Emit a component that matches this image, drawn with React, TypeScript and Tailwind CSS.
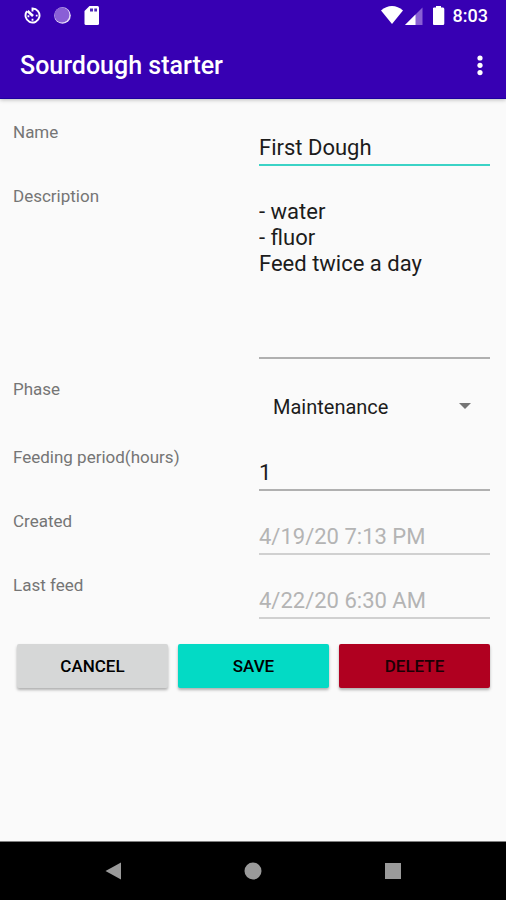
import { useState } from "react";
import type { ReactNode } from "react";

const underline =
  "ml-1.5 mr-[3px] block min-w-0 rounded-none border-b-2 bg-transparent pt-[14px] text-[22px] leading-[26px] outline-none";

function Row({ id, label, className, children }: { id: string; label: string; className: string; children: ReactNode }) {
  return (
    <div className={`grid grid-cols-2 items-start ${className}`}>
      <label htmlFor={id} className="text-[17px] leading-[22px] text-[#757575]">
        {label}
      </label>
      <div className="grid">{children}</div>
    </div>
  );
}

function StatusBar() {
  return (
    <div className="flex h-8 items-center justify-between pr-[18px] pl-6 text-white">
      <div className="flex items-center gap-3">
        <svg width="18" height="18" viewBox="0 0 18 18" fill="none" stroke="currentColor" strokeWidth="1.900" aria-hidden>
          <path d="M8.500 4.500V1.500a7 7 0 1 1-5.500 2.700" />
          <path d="M3.600 4 9 9" strokeWidth="2.600" />
          <path d="M3.500 9.300h1.800M7.600 12.800h1.800M11.800 8.600h1.800" strokeWidth="1.900" />
        </svg>
        <svg width="18" height="18" viewBox="0 0 18 18" aria-hidden>
          <circle cx="8.500" cy="8.500" r="8.300" fill="#e6dcf8" />
          <circle cx="7.900" cy="7.900" r="7.500" fill="#8a5fd6" />
        </svg>
        <svg width="16" height="20" viewBox="0 0 16 20" aria-hidden>
          <path
            fill="currentColor"
            d="M5.500 0h8a1.500 1.500 0 0 1 1.500 1.500v16a1.500 1.500 0 0 1-1.500 1.500h-11.500a1.500 1.500 0 0 1-1.500-1.500V5z"
          />
          <path fill="#4d25b8" d="M6 2.500h3v3H6zM10.300 2.500h2.700v3h-2.700z" />
        </svg>
      </div>
      <div className="flex items-center">
        <svg width="22" height="20" viewBox="0 0 22 20" aria-hidden>
          <path fill="currentColor" d="M0 4.500Q5 0 11 0t11 4.500L11 18z" />
        </svg>
        <svg className="ml-0.5" width="18" height="20" viewBox="0 0 18 20" aria-hidden>
          <path fill="#8a60d4" d="M17.500 1.500v17.500H0z" />
          <path fill="currentColor" d="M10.500 8.500V19H0z" />
        </svg>
        <svg className="ml-2.5" width="12" height="20" viewBox="0 0 12 20" aria-hidden>
          <path fill="currentColor" d="M3 0h5v1.500h2q1.300 0 1.300 1.500v14.500q0 1.500-1.300 1.500h-9q-1.300 0-1.300-1.500V3q0-1.500 1.300-1.500H3z" />
        </svg>
        <span className="ml-2 text-lg leading-5 font-medium">8:03</span>
      </div>
    </div>
  );
}

export default function App() {
  const [name, setName] = useState("First Dough");
  const [description, setDescription] = useState("- water\n- fluor\nFeed twice a day");
  const [phase, setPhase] = useState("Maintenance");
  const [period, setPeriod] = useState("1");

  return (
    <div className="flex min-h-screen flex-col bg-[#fafafa] font-[Roboto,sans-serif] text-[#1c1c1c]">
      <header className="border-b border-[#1d00a0] bg-[#3700b3] shadow-[0_1px_4px_rgba(0,0,0,0.25)]">
        <StatusBar />
        <div className="flex h-[66px] items-center justify-between pt-0.5 pr-3.5 pl-5">
          <h1 className="text-[25px] leading-8 font-medium text-white">Sourdough starter</h1>
          <button type="button" aria-label="More options" className="flex h-8 w-6 items-center justify-center text-white">
            <svg width="6" height="22" viewBox="0 0 6 22" fill="currentColor" aria-hidden>
              <circle cx="3" cy="3" r="2.600" />
              <circle cx="3" cy="10.300" r="2.600" />
              <circle cx="3" cy="17.600" r="2.600" />
            </svg>
          </button>
        </div>
      </header>

      <main className="flex-1 pt-[22px]">
        <form onSubmit={(e) => e.preventDefault()}>
          <div className="px-[13px]">
            <Row id="name" label="Name" className="h-16">
              <input
                id="name"
                className={`${underline} border-[#3bd3c6] pb-[3px]`}
                value={name}
                onChange={(e) => setName(e.target.value)}
              />
            </Row>
            <Row id="description" label="Description" className="h-[193px]">
              <textarea
                id="description"
                className={`${underline} h-[174px] resize-none border-[#b0b0b0]`}
                value={description}
                onChange={(e) => setDescription(e.target.value)}
              />
            </Row>
            <Row id="phase" label="Phase" className="h-[68px]">
              <div className="relative grid pt-[13px]">
                <select
                  id="phase"
                  className="h-8 appearance-none bg-transparent pl-5 text-xl leading-8 outline-none"
                  value={phase}
                  onChange={(e) => setPhase(e.target.value)}
                >
                  <option>Maintenance</option>
                  <option>Growth</option>
                </select>
                <svg
                  className="pointer-events-none absolute top-[25px] right-[22px]"
                  width="12"
                  height="6"
                  viewBox="0 0 12 6"
                  aria-hidden
                >
                  <path fill="#757575" d="M0 0h12L6 6z" />
                </svg>
              </div>
            </Row>
            <Row id="period" label="Feeding period(hours)" className="h-16">
              <input
                id="period"
                inputMode="numeric"
                className={`${underline} border-[#b0b0b0] pb-[3px]`}
                value={period}
                onChange={(e) => setPeriod(e.target.value)}
              />
            </Row>
            <Row id="created" label="Created" className="h-16">
              <input
                id="created"
                disabled
                className={`${underline} border-[#d0d0d0] pb-[3px] text-[#b4b4b4]`}
                value="4/19/20 7:13 PM"
              />
            </Row>
            <Row id="last-feed" label="Last feed" className="h-16">
              <input
                id="last-feed"
                disabled
                className={`${underline} border-[#d0d0d0] pb-[3px] text-[#b4b4b4]`}
                value="4/22/20 6:30 AM"
              />
            </Row>
          </div>
          <div className="flex gap-2.5 pt-1.5 pr-4 pl-[17px] text-[17px] leading-6 font-medium text-black">
            <button type="button" className="h-11 flex-1 rounded-xs bg-[#d6d7d7] shadow-[0_2px_3px_rgba(0,0,0,0.3)]">
              CANCEL
            </button>
            <button type="submit" className="h-11 flex-1 rounded-xs bg-[#03dac5] shadow-[0_2px_3px_rgba(0,0,0,0.3)]">
              SAVE
            </button>
            <button type="button" className="h-11 flex-1 rounded-xs bg-[#b00020] text-[#1c0005] shadow-[0_2px_3px_rgba(0,0,0,0.3)]">
              DELETE
            </button>
          </div>
        </form>
      </main>

      <nav className="flex h-[59px] items-center justify-center gap-[116px] border-t border-[#808080] bg-black text-[#9a9a9a]">
        <button type="button" aria-label="Back" className="flex h-8 w-6 items-center justify-center">
          <svg width="18" height="18" viewBox="0 0 18 18" fill="currentColor" aria-hidden>
            <path d="M1.500 9 17 0.500v17z" />
          </svg>
        </button>
        <button type="button" aria-label="Home" className="flex h-8 w-6 items-center justify-center">
          <svg width="18" height="18" viewBox="0 0 18 18" fill="currentColor" aria-hidden>
            <circle cx="9" cy="9" r="8.500" />
          </svg>
        </button>
        <button type="button" aria-label="Recent apps" className="flex h-8 w-6 items-center justify-center">
          <svg width="18" height="18" viewBox="0 0 18 18" fill="currentColor" aria-hidden>
            <rect x="1" y="1" width="16" height="16" />
          </svg>
        </button>
      </nav>
    </div>
  );
}
